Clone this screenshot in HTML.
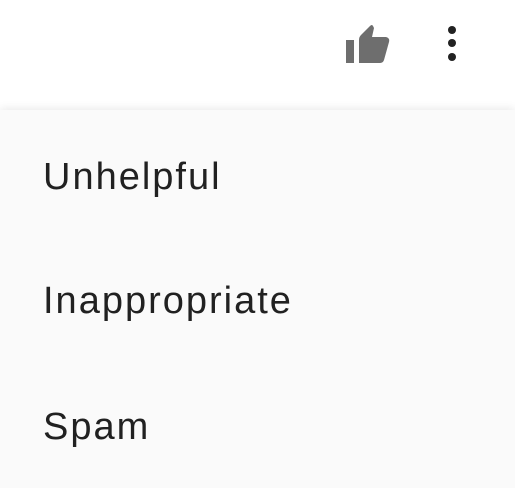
<!DOCTYPE html>
<html><head><style>
html,body{margin:0;padding:0;width:515px;height:488px;overflow:hidden;background:#fff;font-family:"Liberation Sans",Roboto,sans-serif;}
.menu{position:absolute;left:0;top:110px;width:515px;height:378px;background:#fafafa;box-shadow:0 -2px 8px rgba(0,0,0,0.08);}
.item{position:absolute;left:43px;font-size:38px;letter-spacing:2px;color:#212121;line-height:1;}
</style></head><body>
<svg style="position:absolute;left:0;top:0" width="515" height="110">
<rect x="346" y="40" width="8" height="23" fill="#6e6e6e"/>
<path d="M359 63 L359 40 Q359 37 361 35 L370 26 Q372 24 373 26 L374 28 L372 37 L386 37 Q390 38 389 42 L384 60 Q383 63 380 63 Z" fill="#6e6e6e"/>
<circle cx="452" cy="30" r="4" fill="#222"/>
<circle cx="452" cy="43" r="4" fill="#222"/>
<circle cx="452" cy="57" r="4" fill="#222"/>
</svg>
<div class="menu"></div>
<div class="item" style="top:158px">Unhelpful</div>
<div class="item" style="top:282px">Inappropriate</div>
<div class="item" style="top:408px">Spam</div>
</body></html>
